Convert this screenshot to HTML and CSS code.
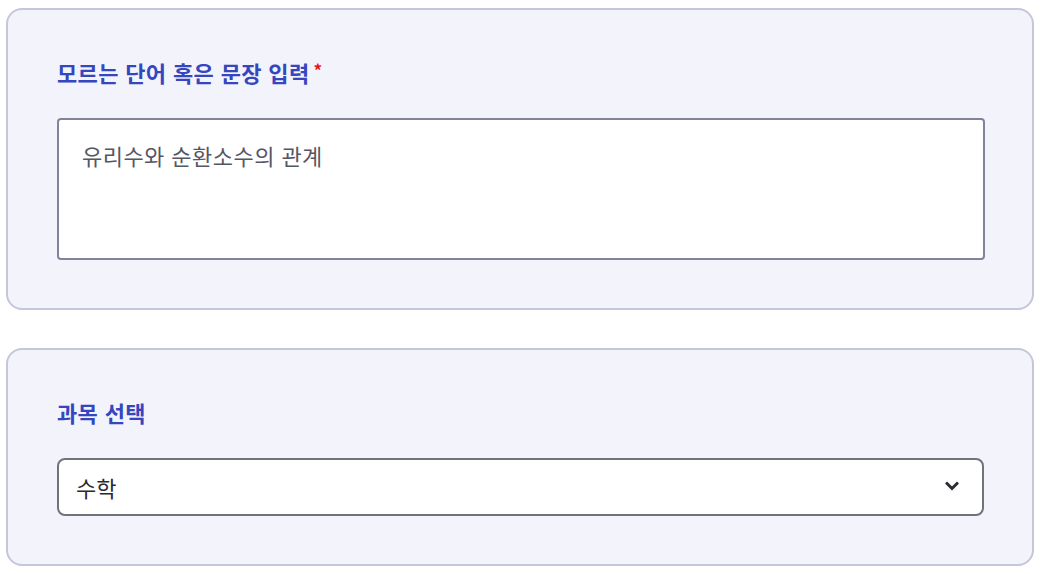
FILE: index.html
```html
<!DOCTYPE html>
<html lang="ko">
<head>
    <meta charset="UTF-8">
    <meta name="viewport" content="width=device-width, initial-scale=1.0">
    <title>단어 입력</title>
    <link rel="stylesheet" href="styles.css">
</head>
<body>
    <div class="page">
        <section class="card">
            <label class="field-label" for="query">모르는 단어 혹은 문장 입력<span class="required">*</span></label>
            <textarea id="query" class="text-input">유리수와 순환소수의 관계</textarea>
        </section>
        <section class="card">
            <label class="field-label" for="subject">과목 선택</label>
            <div class="select-wrap">
                <select id="subject" class="select-input">
                    <option>수학</option>
                    <option>국어</option>
                    <option>영어</option>
                    <option>과학</option>
                    <option>사회</option>
                </select>
                <svg class="chevron" width="14" height="10" viewBox="0 0 14 10">
                    <path d="M2 2.5 L7 7.5 L12 2.5" fill="none" stroke="#2b2b33" stroke-width="3" stroke-linecap="square"/>
                </svg>
            </div>
        </section>
    </div>
</body>
</html>
```

FILE: styles.css
```css
body {
    margin: 0;
    background: #ffffff;
    font-family: 'Noto Sans CJK KR', 'Noto Sans', sans-serif;
}

.page {
    padding: 8px 10px 8px 6px;
    display: flex;
    flex-direction: column;
    gap: 38px;
}

.card {
    background: #f2f3fb;
    border: 2px solid #c5c6da;
    border-radius: 16px;
    padding: 48px;
    display: flex;
    flex-direction: column;
    gap: 32px;
}

.field-label {
    font-size: 22px;
    font-weight: 700;
    line-height: 28px;
    height: 28px;
    letter-spacing: 0.35px;
    color: #3546be;
    padding-left: 1px;
}

.required {
    color: #e8141e;
    font-size: 17px;
    line-height: 0;
    vertical-align: 5px;
    margin-left: 4px;
}

.text-input {
    box-sizing: border-box;
    width: 100%;
    height: 142px;
    margin: 0 0 0 1px;
    padding: 20px 23px;
    border: 2px solid #80839b;
    border-radius: 4px;
    background: #ffffff;
    font-family: inherit;
    font-size: 22px;
    line-height: 30px;
    letter-spacing: 0.45px;
    color: #555665;
    resize: none;
    outline: none;
}

.select-wrap {
    position: relative;
    margin-left: 1px;
}

.select-input {
    box-sizing: border-box;
    width: 100%;
    height: 58px;
    padding: 0 50px 0 17px;
    border: 2px solid #727279;
    border-radius: 8px;
    background: #ffffff;
    font-family: inherit;
    font-size: 22px;
    color: #2a2a30;
    appearance: none;
    -webkit-appearance: none;
    outline: none;
}

.chevron {
    position: absolute;
    right: 25px;
    top: 23px;
    pointer-events: none;
}
```
